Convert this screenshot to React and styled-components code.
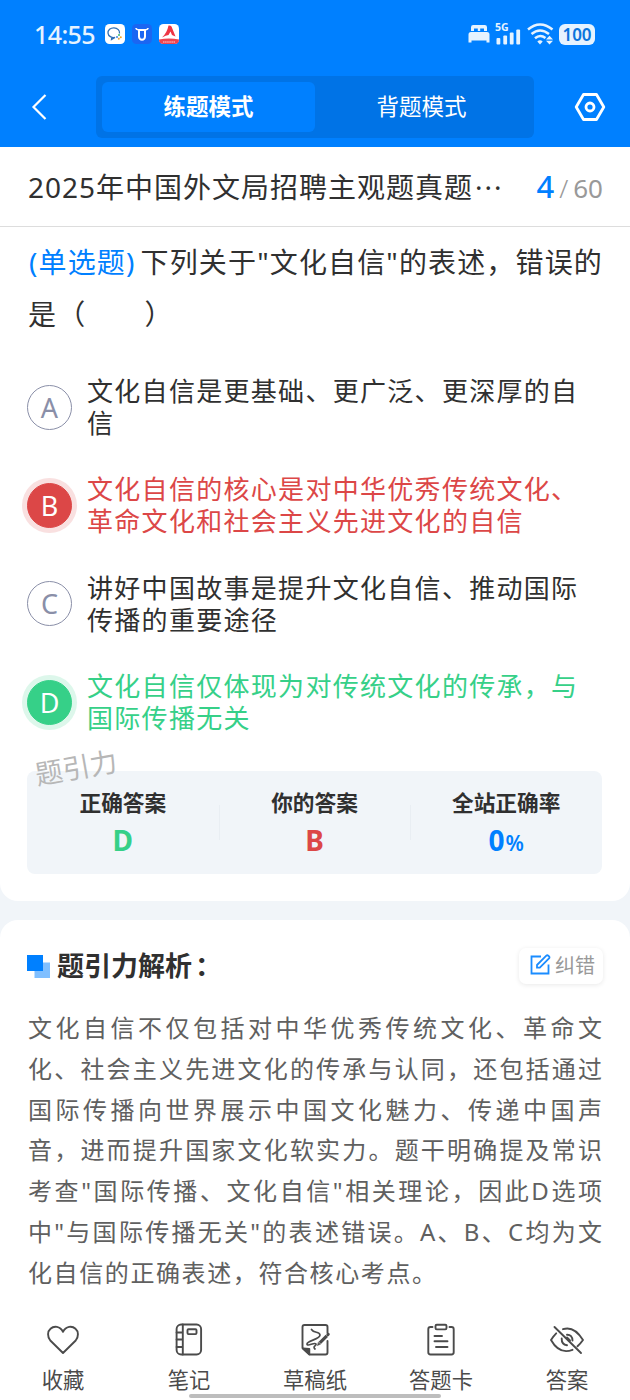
import React, { useState } from 'react'

import styled, { createGlobalStyle } from 'styled-components';

const options = [
  { key: 'A', lines: ['文化自信是更基础、更广泛、更深厚的自', '信'] },
  { key: 'B', lines: ['文化自信的核心是对中华优秀传统文化、', '革命文化和社会主义先进文化的自信'], state: 'wrong' },
  { key: 'C', lines: ['讲好中国故事是提升文化自信、推动国际', '传播的重要途径'] },
  { key: 'D', lines: ['文化自信仅体现为对传统文化的传承，与', '国际传播无关'], state: 'right' }
];

const analysis = [
  '文化自信不仅包括对中华优秀传统文化、革命文',
  '化、社会主义先进文化的传承与认同，还包括通过',
  '国际传播向世界展示中国文化魅力、传递中国声',
  '音，进而提升国家文化软实力。题干明确提及常识',
  '考查"国际传播、文化自信"相关理论，因此D选项',
  '中"与国际传播无关"的表述错误。A、B、C均为文',
  '化自信的正确表述，符合核心考点。'
];

const colors = {
  wrong: '#dc4747',
  right: '#36d088'
};

const StatusIcons = () => (
  <StatusGroup>
    <svg width="22" height="20" viewBox="0 0 22 20" fill="#e6f3ff">
      <path d="M3 7V3.2Q3 1 5.2 1H16.8Q19 1 19 3.2V7H16V4.5H12.2V7H9.8V4.5H6V7Z" />
      <path d="M.5 18.5V10.5Q.5 8 3 8H19Q21.500 8 21.500 10.500V18.500H18.500V16.500H3.500V18.500Z" />
    </svg>
    <Signal>
      <small>5G</small>
      <svg width="26" height="22" viewBox="0 0 26 22" fill="#e6f3ff">
        <rect x="1.500" y="15" width="3.800" height="6.500" rx="1" />
        <rect x="8.300" y="12.500" width="3.800" height="9" rx="1" />
        <rect x="14.800" y="9.500" width="3.800" height="12" rx="1" />
        <rect x="21.300" y="6.500" width="3.800" height="15" rx="1" />
      </svg>
    </Signal>
    <svg width="27" height="22" viewBox="0 0 27 22" fill="none" stroke="#e6f3ff" strokeWidth="2.500">
      <path d="M1 6.500Q13 -3.500 25.500 6.500M4.500 11Q13 4 22 11M8 15.300Q13 11 18.500 15" />
      <path d="M10.300 18.500Q13 16 15.700 18.500L13 21.500Z" fill="#e6f3ff" stroke="none" />
      <path d="M22.500 12.800L26 16.500H19ZM22.500 21.500L26 17.800H19Z" fill="#e6f3ff" stroke="none" />
    </svg>
    <Battery>100</Battery>
  </StatusGroup>
);

const AppIcons = () => (
  <AppIconRow>
    <svg width="20" height="20" viewBox="0 0 20 20" fill="none">
      <rect width="20" height="20" rx="4.500" fill="#fff" />
      <path d="M14.500 9.500A5.800 4.900 0 1 0 10 13.500L6.500 15.500L6.800 13" stroke="#2f6fb5" strokeWidth="1.300" />
      <circle cx="14" cy="11" r="1" fill="#3cba6a" />
      <circle cx="15.800" cy="13.200" r="1" fill="#f5a623" />
      <circle cx="13.800" cy="14.800" r="1" fill="#e8a03c" />
      <circle cx="12" cy="13" r="1" fill="#3b87e0" />
    </svg>
    <svg width="20" height="20" viewBox="0 0 20 20" fill="none">
      <rect width="20" height="20" rx="4.500" fill="#1b66f2" />
      <path d="M4 4Q4 5.500 6.800 6M16 4Q16 5.500 13.200 6" stroke="#fff" strokeWidth="1.500" />
      <path d="M7 6H13V12.500A3 3.300 0 0 1 7 12.500Z" stroke="#fff" strokeWidth="2" />
    </svg>
    <svg width="20" height="20" viewBox="0 0 20 20">
      <rect width="20" height="20" rx="4.500" fill="#fff" />
      <path d="M0 15.500Q10 13.500 20 15.500Q20 20 15.500 20H4.500Q0 20 0 15.500Z" fill="#ef4350" />
      <path d="M3 13.500Q8 9 9.500 1.500Q11.500 1 12.500 2.500L16.500 12.500L13 11L11.500 7.500L9.500 11Q7 11 3 13.500Z" fill="#ee3544" />
      <path d="M4 18H16" stroke="#f9a5ab" strokeWidth="1.400" strokeDasharray="1.500 .6" />
    </svg>
  </AppIconRow>
);

const HeartIcon = () => (
  <NavSvg viewBox="0 0 36 36">
    <path d="M18 31L5.300 18.500C2.300 15 2.300 9.500 5.500 6.800C9 3.500 15 4 18 9.800C21 4 27 3.500 30.500 6.800C33.700 9.500 33.700 15 30.700 18.500Z" />
  </NavSvg>
);

const NoteIcon = () => (
  <NavSvg viewBox="0 0 36 36">
    <rect x="5.600" y="2.500" width="24.500" height="30" rx="4.500" />
    <path d="M11.800 2.500V32.500M5.600 10.500H11.800M5.600 17.500H11.800M5.600 25H11.800" />
    <rect x="16.500" y="7.300" width="9" height="4.800" rx="1" />
  </NavSvg>
);

const DraftIcon = () => (
  <NavSvg viewBox="0 0 36 36">
    <path d="M30.500 11V4.800Q30.500 3 28.500 3H7.500Q5.500 3 5.500 5V26L12.500 32.500H28.500Q30.500 32.500 30.500 30.500V19" />
    <path d="M6 26.500L12.300 27V32.300Z" fill="#4b4b4b" />
    <path d="M14.500 7.500C17 11.500 22.500 9 23 13C23 17.500 10 18.500 10 22C10 25 17.500 20 19 22C20 23.500 15 24.500 18 27" strokeWidth="1.700" />
    <path d="M29.800 13.800L22.800 20.800" strokeWidth="3.200" strokeLinecap="butt" />
    <path d="M31.300 12.300L30.800 12.800" strokeWidth="3" />
    <path d="M21.600 20.300L23.500 22.200L20.500 23.500Z" fill="#4b4b4b" strokeWidth=".5" />
  </NavSvg>
);

const CardIcon = () => (
  <NavSvg viewBox="0 0 36 36">
    <path d="M9.500 5H7.500Q5.300 5 5.300 7.200V30.300Q5.300 32.500 7.500 32.500H28.500Q30.700 32.500 30.700 30.300V7.200Q30.700 5 28.500 5H26.500" />
    <rect x="12.500" y="2.800" width="11" height="4.600" rx="1.300" />
    <path d="M11.500 14H19M11.500 19.300H24.500M13 25H24.500" />
  </NavSvg>
);

const EyeOffIcon = () => (
  <NavSvg viewBox="0 0 36 36">
    <path d="M14 7.200Q25 3.500 34 18Q31.500 21.500 28.500 24.300M23.500 27.800Q10.500 33 2 18Q4.500 14 7.200 11.300" />
    <path d="M5.500 5L32 31" />
    <path d="M18 12.700Q23.300 12.500 23.500 18.500M12.700 16.500Q12.500 22.500 18 23.300M18 15.500L21 18.500" />
  </NavSvg>
);

const navItems = [
  { label: '收藏', icon: HeartIcon },
  { label: '笔记', icon: NoteIcon },
  { label: '草稿纸', icon: DraftIcon },
  { label: '答题卡', icon: CardIcon },
  { label: '答案', icon: EyeOffIcon }
];

const App = () => {
  const [mode, setMode] = useState('practice');

  return (
    <Page>
      <GlobalStyle />
      <Header>
        <StatusBar>
          <Clock>14:55</Clock>
          <AppIcons />
          <StatusIcons />
        </StatusBar>
        <TopBar>
          <BackIcon viewBox="0 0 16 28">
            <path d="M14.500 2L2.500 14L14.500 26" />
          </BackIcon>
          <Tabs>
            <Tab $active={mode === 'practice'} onClick={() => setMode('practice')}>练题模式</Tab>
            <Tab $active={mode === 'recite'} onClick={() => setMode('recite')}>背题模式</Tab>
          </Tabs>
          <SettingsIcon viewBox="0 0 32 30">
            <path d="M9.500 2.500H22.500L29.800 15L22.500 27.500H9.500L2.200 15Z" />
            <circle cx="16" cy="15" r="4" />
          </SettingsIcon>
        </TopBar>
      </Header>

      <TitleRow>
        <Title>2025年中国外文局招聘主观题真题<Dots>···</Dots></Title>
        <Progress><b>4</b><i>/</i>60</Progress>
      </TitleRow>

      <QuestionCard>
        <Question>
          <span><em>(单选题)</em>下列关于"文化自信"的表述，错误的</span>
          <span>是（　　）</span>
        </Question>

        {options.map(({ key, lines, state }) => (
          <Option key={key}>
            <OptionBadge $state={state}>{key}</OptionBadge>
            <OptionText $state={state}>
              {lines.map((line) => <span key={line}>{line}</span>)}
            </OptionText>
          </Option>
        ))}

        <Stats>
          <Watermark>题引力</Watermark>
          <Stat>
            <StatLabel>正确答案</StatLabel>
            <StatValue $color={colors.right}>D</StatValue>
          </Stat>
          <Stat>
            <StatLabel>你的答案</StatLabel>
            <StatValue $color={colors.wrong}>B</StatValue>
          </Stat>
          <Stat>
            <StatLabel>全站正确率</StatLabel>
            <StatValue $color="#0080ff">0<small>%</small></StatValue>
          </Stat>
        </Stats>
      </QuestionCard>

      <AnalysisCard>
        <AnalysisHeader>
          <svg width="23" height="23" viewBox="0 0 23 23">
            <rect x="7.500" y="7.500" width="15.500" height="15.500" fill="#80bfff" />
            <rect width="16" height="16" fill="#0080ff" />
          </svg>
          <h4>题引力解析<span>：</span></h4>
          <ReportButton>
            <svg width="21" height="21" viewBox="0 0 21 21" fill="none" stroke="#1a8cff" strokeWidth="1.800">
              <path d="M11 2.500H1.500V19.500H18.500V10.500" />
              <path d="M7 11L16.300 1.700Q17.300 .9 18.300 1.700L19 2.400Q19.900 3.400 19 4.400L9.800 13.600H7Z" />
            </svg>
            纠错
          </ReportButton>
        </AnalysisHeader>
        <AnalysisText>
          {analysis.map((line) => <p key={line}>{line}</p>)}
        </AnalysisText>
      </AnalysisCard>

      <BottomNav>
        {navItems.map(({ label, icon: Icon }) => (
          <NavItem key={label}>
            <Icon />
            {label}
          </NavItem>
        ))}
        <HomeIndicator />
      </BottomNav>
    </Page>
  )
}

export default App;


const GlobalStyle = createGlobalStyle`
    * {
      box-sizing: border-box;
    }
    body {
      margin: 0;
      background: #f1f5f9;
      font-family: "Noto Sans", "Noto Sans CJK SC", sans-serif;
    }
    button {
      border: 0;
      padding: 0;
      background: none;
      font-family: inherit;
    }
`;

const Page = styled.div`
    width: 630px;
    height: 1400px;
    display: flex;
    flex-direction: column;
    overflow: hidden;
`;

const Header = styled.header`
    flex: none;
    height: 147px;
    background: #0080ff;
`;

const StatusBar = styled.div`
    display: flex;
    align-items: center;
    height: 68px;
    padding: 0 35px 0 34px;
    color: #e6f3ff;
`;

const Clock = styled.div`
    width: 71px;
    font-size: 25px;
    font-weight: 500;
    line-height: 30px;
    letter-spacing: -0.6px;
`;

const AppIconRow = styled.div`
    display: flex;
    gap: 7px;
`;

const StatusGroup = styled.div`
    display: flex;
    align-items: center;
    margin-left: auto;
`;

const Signal = styled.div`
    position: relative;
    display: flex;
    margin: 0 6px 0 5px;

    small {
      position: absolute;
      top: -2px;
      left: 0;
      font-size: 10.5px;
      font-weight: 700;
      line-height: 12px;
    }
`;

const Battery = styled.div`
    width: 36px;
    height: 21px;
    margin-left: 5px;
    border-radius: 6px;
    background: #e6f3ff;
    color: #0b74dc;
    font-size: 17px;
    font-weight: 600;
    line-height: 21px;
    text-align: center;
`;

const TopBar = styled.div`
    display: flex;
    align-items: center;
    height: 77px;
    padding: 0 24px 0 31px;
`;

const BackIcon = styled.svg`
    width: 16px;
    height: 28px;
    fill: none;
    stroke: #fff;
    stroke-width: 2.2;
`;

const SettingsIcon = styled.svg`
    width: 32px;
    height: 30px;
    margin-left: auto;
    fill: none;
    stroke: #fff;
    stroke-width: 2.8;
    stroke-linejoin: round;
`;

const Tabs = styled.div`
    display: flex;
    width: 438px;
    height: 62px;
    margin-left: 49px;
    padding: 6px;
    border-radius: 6px;
    background: #0073e6;
`;

const Tab = styled.button`
    flex: 1;
    border-radius: 6px;
    background: ${(props) => (props.$active ? '#0080ff' : 'transparent')};
    color: #fff;
    font-size: 22.5px;
    font-weight: ${(props) => (props.$active ? 700 : 400)};
    line-height: 50px;
`;

const TitleRow = styled.div`
    flex: none;
    display: flex;
    align-items: center;
    justify-content: space-between;
    height: 80px;
    padding: 0 27px 2px 28px;
    border-bottom: 1px solid #ddd;
    background: #fff;
`;

const Title = styled.div`
    color: #303030;
    font-size: 28px;
    letter-spacing: 1px;
    white-space: nowrap;
`;

const Dots = styled.span`
    margin-left: 2px;
    letter-spacing: 2px;
`;

const Progress = styled.div`
    display: flex;
    align-items: baseline;
    color: #999;
    font-size: 26px;

    b {
      color: #0080ff;
      font-size: 31px;
      font-weight: 500;
    }
    i {
      margin: 0 5px 0 5px;
      font-weight: 300;
      font-style: normal;
    }
`;

const QuestionCard = styled.section`
    flex: none;
    height: 674px;
    padding: 9px 27px 0;
    border-radius: 0 0 18px 18px;
    background: #fff;
`;

const Question = styled.div`
    height: 122px;
    padding-left: 1px;
    color: #303030;
    font-size: 28px;
    letter-spacing: 1.15px;
    line-height: 52px;
    white-space: nowrap;

    > span {
      display: block;
    }
    em {
      margin: 0 5px 0 1px;
      color: #0080ff;
      font-style: normal;
    }
`;

const Option = styled.div`
    display: flex;
    align-items: center;
    height: 98.3px;
`;

const OptionBadge = styled.div`
    width: 45px;
    height: 45px;
    margin-right: 15px;
    border: 1.5px solid ${(props) => (props.$state ? colors[props.$state] : '#8a8fa8')};
    border-radius: 50%;
    background: ${(props) => (props.$state ? colors[props.$state] : '#fff')};
    color: ${(props) => (props.$state ? '#fff' : '#8a8fa8')};
    font-size: 27px;
    line-height: 43px;
    text-align: center;

    ${(props) =>
        props.$state &&
        `
        box-shadow: 0 0 0 5px ${colors[props.$state]}2b;
        `
    }
`;

const OptionText = styled.div`
    color: ${(props) => (props.$state ? colors[props.$state] : '#303030')};
    font-size: 26px;
    letter-spacing: 1.3px;
    line-height: 32px;
    white-space: nowrap;

    span {
      display: block;
    }
`;

const Stats = styled.div`
    position: relative;
    display: flex;
    width: 575px;
    height: 103px;
    margin-top: 20px;
    border-radius: 8px;
    background: #f1f5f9;
`;

const Stat = styled.div`
    flex: 1;
    display: flex;
    flex-direction: column;
    align-items: center;
    padding-top: 16px;

    & + & {
      background: linear-gradient(#e9eef3, #e9eef3) left 34px / 1px 35px no-repeat;
    }
`;

const StatLabel = styled.div`
    color: #303030;
    font-size: 21.7px;
    font-weight: 700;
    line-height: 32px;
`;

const StatValue = styled.div`
    color: ${(props) => props.$color};
    font-size: 28px;
    font-weight: 700;
    line-height: 42px;

    small {
      margin-left: 1px;
      font-size: 21px;
      font-weight: 600;
    }
`;

const Watermark = styled.div`
    position: absolute;
    top: -23px;
    left: 8px;
    color: #b7b7b7;
    font-size: 27.5px;
    line-height: 40px;
    transform: rotate(-10deg);
`;

const AnalysisCard = styled.section`
    flex: none;
    height: 386px;
    margin-top: 19px;
    padding: 25px 27px 0;
    border-radius: 18px 18px 0 0;
    background: #fff;
`;

const AnalysisHeader = styled.div`
    display: flex;
    align-items: center;
    height: 42px;

    h4 {
      margin: 0 0 0 7px;
      color: #303030;
      font-size: 27px;
      font-weight: 700;
      line-height: 42px;
    }
    h4 span {
      margin-left: 3px;
    }
`;

const ReportButton = styled.button`
    display: flex;
    align-items: center;
    gap: 4px;
    width: 84px;
    height: 36px;
    margin-left: auto;
    padding-left: 11px;
    border-radius: 7px;
    background: #fff;
    box-shadow: 0 1px 5px rgba(0, 0, 0, 0.09);
    color: #999;
    font-size: 20px;
    line-height: 36px;

    svg {
      margin-bottom: 4px;
    }
`;

const AnalysisText = styled.div`
    width: 576px;
    margin-top: 21px;
    padding-left: 1px;
    color: #606060;
    font-size: 24px;
    letter-spacing: 1px;
    line-height: 40.8px;

    p {
      margin: 0;
      text-align: justify;
      text-align-last: justify;
      white-space: nowrap;
    }
    p:last-child {
      letter-spacing: 1.6px;
      text-align-last: left;
    }
`;

const BottomNav = styled.nav`
    position: relative;
    flex: 1;
    display: flex;
    padding-top: 16px;
    background: #fff;
`;

const NavItem = styled.div`
    flex: 1;
    display: flex;
    flex-direction: column;
    align-items: center;
    gap: 6px;
    color: #4b4b4b;
    font-size: 21.3px;
    line-height: 32px;
`;

const NavSvg = styled.svg`
    width: 36px;
    height: 36px;
    fill: none;
    stroke: #4b4b4b;
    stroke-width: 1.9;
    stroke-linejoin: round;
    stroke-linecap: round;
`;

const HomeIndicator = styled.div`
    position: absolute;
    bottom: 2px;
    left: 189px;
    width: 252px;
    height: 4.5px;
    border-radius: 3px;
    background: #bdbdbd;
`;
